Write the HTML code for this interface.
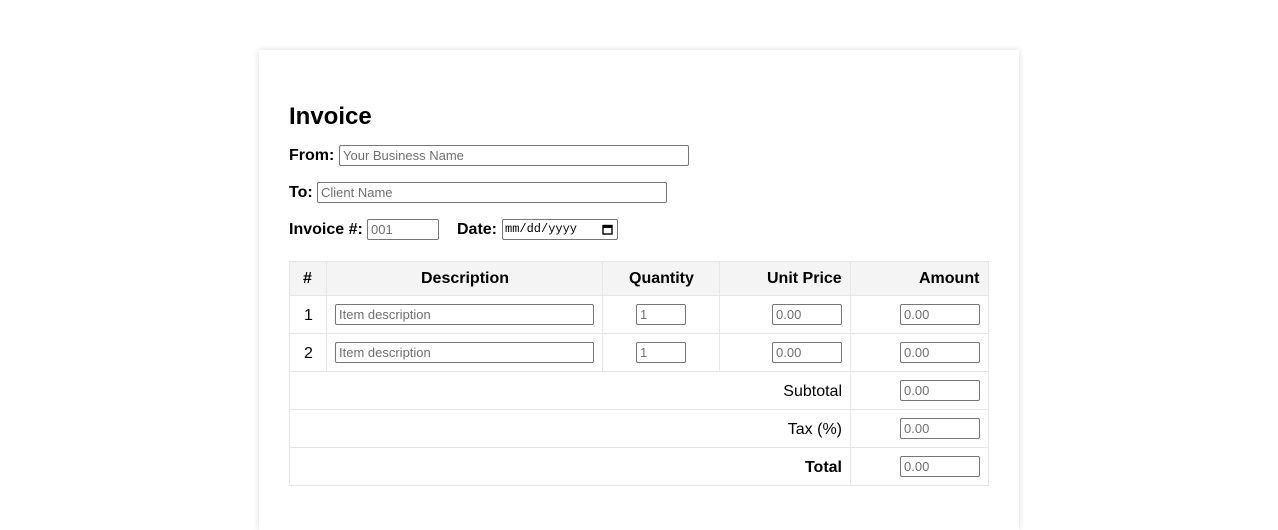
<!DOCTYPE html>
<html><head><style>
*{box-sizing:border-box;margin:0;padding:0}
body{width:1278px;height:501px;overflow:hidden;background:#fff;font-family:"Liberation Sans",Arial,sans-serif;position:relative}
.card{position:absolute;left:259px;top:50px;width:760px;height:480px;background:#fff;box-shadow:0 0 6px rgba(0,0,0,0.15)}
.a{position:absolute}
.lbl{font-weight:bold;font-size:16px;color:#000}
.in{position:absolute;border:1px solid #767676;border-radius:2px;background:#fff;font-size:13px;color:#6f6f6f;padding-left:3px;line-height:19px;height:21px}
.t{position:absolute;font-size:16px;color:#000}
</style></head><body>
<div class="card"></div>
<div class="a" style="left:289px;top:103px;font-size:24px;font-weight:bold">Invoice</div>
<div class="a lbl" style="left:289px;top:147px">From:</div>
<div class="in" style="left:339px;top:145px;width:350px">Your Business Name</div>
<div class="a lbl" style="left:289px;top:184px">To:</div>
<div class="in" style="left:317px;top:182px;width:350px">Client Name</div>
<div class="a lbl" style="left:289px;top:221px">Invoice #:</div>
<div class="in" style="left:367px;top:219px;width:72px">001</div>
<div class="a lbl" style="left:457px;top:221px">Date:</div>
<div class="in" style="left:502px;top:219px;width:116px;font-family:'Liberation Mono',monospace;color:#000;font-size:12px;padding-left:2px">mm/dd/yyyy<svg style="position:absolute;right:4px;top:4px" width="11" height="11" viewBox="0 0 11 11"><rect x="1" y="1.5" width="9" height="8.5" fill="none" stroke="#000" stroke-width="1.4"/><rect x="1" y="1.5" width="9" height="2.5" fill="#000"/></svg></div>

<div class="a" style="left:289px;top:261px;width:700px;height:225px;border-left:1px solid #e6e6e6;border-top:1px solid #e6e6e6"></div>
<div class="a" style="left:290px;top:262px;width:698px;height:33px;background:#f4f4f4"></div>
<div class="a" style="left:289px;top:295px;width:700px;height:1px;background:#e6e6e6"></div>
<div class="a" style="left:289px;top:333px;width:700px;height:1px;background:#e6e6e6"></div>
<div class="a" style="left:289px;top:371px;width:700px;height:1px;background:#e6e6e6"></div>
<div class="a" style="left:289px;top:409px;width:700px;height:1px;background:#e6e6e6"></div>
<div class="a" style="left:289px;top:447px;width:700px;height:1px;background:#e6e6e6"></div>
<div class="a" style="left:289px;top:485px;width:700px;height:1px;background:#e6e6e6"></div>
<div class="a" style="left:988px;top:261px;width:1px;height:225px;background:#e6e6e6"></div>
<div class="a" style="left:326px;top:261px;width:1px;height:110px;background:#e6e6e6"></div>
<div class="a" style="left:602px;top:261px;width:1px;height:110px;background:#e6e6e6"></div>
<div class="a" style="left:719px;top:261px;width:1px;height:110px;background:#e6e6e6"></div>
<div class="a" style="left:850px;top:261px;width:1px;height:225px;background:#e6e6e6"></div>

<div class="t" style="left:303px;top:270px;font-weight:bold">#</div>
<div class="t" style="left:421px;top:270px;font-weight:bold">Description</div>
<div class="t" style="left:629px;top:270px;font-weight:bold">Quantity</div>
<div class="t" style="left:767px;top:270px;font-weight:bold">Unit Price</div>
<div class="t" style="left:919px;top:270px;font-weight:bold">Amount</div>

<div class="t" style="left:304px;top:307px">1</div>
<div class="in" style="left:335px;top:304px;width:259px">Item description</div>
<div class="in" style="left:636px;top:304px;width:50px">1</div>
<div class="in" style="left:772px;top:304px;width:70px">0.00</div>
<div class="in" style="left:900px;top:304px;width:80px">0.00</div>

<div class="t" style="left:304px;top:345px">2</div>
<div class="in" style="left:335px;top:342px;width:259px">Item description</div>
<div class="in" style="left:636px;top:342px;width:50px">1</div>
<div class="in" style="left:772px;top:342px;width:70px">0.00</div>
<div class="in" style="left:900px;top:342px;width:80px">0.00</div>

<div class="t" style="right:436px;top:383px">Subtotal</div>
<div class="in" style="left:900px;top:380px;width:80px">0.00</div>
<div class="t" style="right:436px;top:421px">Tax (%)</div>
<div class="in" style="left:900px;top:418px;width:80px">0.00</div>
<div class="t" style="right:436px;top:459px;font-weight:bold">Total</div>
<div class="in" style="left:900px;top:456px;width:80px">0.00</div>
</body></html>
